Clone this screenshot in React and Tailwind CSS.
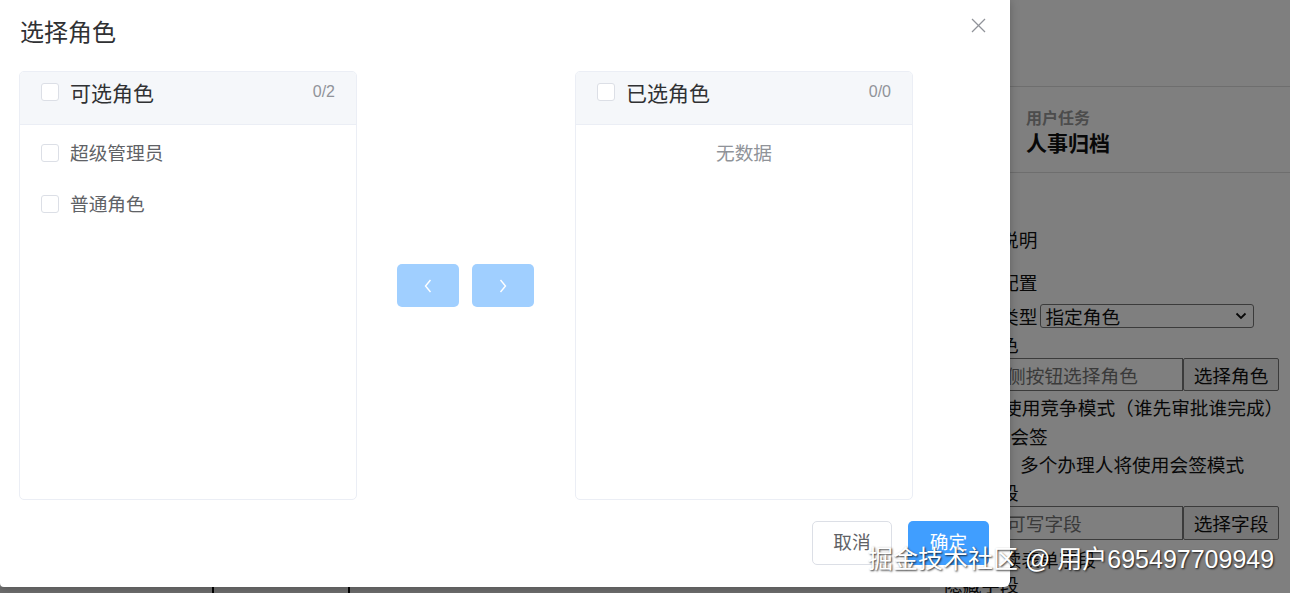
import React from "react";

const CJK = { fontFamily: '"Noto Sans CJK SC", "Noto Sans", sans-serif' };

function Checkbox() {
  return <span className="inline-block w-[18px] h-[18px] shrink-0 rounded-[3px] border border-[#dcdfe6] bg-white" />;
}

function Panel({ title, count, children }) {
  return (
    <div className="w-[338px] h-[429px] shrink-0 rounded-[5px] border border-[#ebeef5] bg-white overflow-hidden flex flex-col">
      <div className="h-[53px] shrink-0 bg-[#f5f7fa] border-b border-[#ebeef5] flex items-center pl-[21px] pr-[21px] pb-[12px]">
        <Checkbox />
        <span className="ml-[11px] text-[21px] text-[#303133] leading-none">{title}</span>
        <span className="ml-auto text-[16px] text-[#909399] leading-none" style={{ fontFamily: '"Liberation Sans", Arial, sans-serif' }}>{count}</span>
      </div>
      <div className="flex-1 pt-[2px]">{children}</div>
    </div>
  );
}

function Item({ label }) {
  return (
    <div className="h-[51px] flex items-center pl-[21px]">
      <Checkbox />
      <span className="ml-[11px] text-[18.7px] text-[#606266] leading-none">{label}</span>
    </div>
  );
}

function ArrowBtn({ dir }) {
  return (
    <div className="w-[62px] h-[43px] rounded-[5px] bg-[#a0cfff] flex items-center justify-center">
      <svg width="10" height="16" viewBox="0 0 10 16" fill="none" stroke="white" strokeWidth="1.4">
        {dir === "left" ? <polyline points="7.5,2 2.5,8 7.5,14" /> : <polyline points="2.5,2 7.5,8 2.5,14" />}
      </svg>
    </div>
  );
}

export default function App() {
  return (
    <div className="relative w-[1290px] h-[593px] overflow-hidden bg-white" style={CJK}>
      {/* underlying page */}
      <div className="flex h-full">
        <div className="w-[930px] flex flex-col">
          <div className="flex-1" />
          <div className="h-[6px] bg-[#dcdcdc] flex">
            <div className="w-[212px]" />
            <div className="w-[2px] bg-black" />
            <div className="w-[134px]" />
            <div className="w-[2px] bg-black" />
          </div>
        </div>
        <div className="w-[360px] flex flex-col text-[18.7px] leading-[28px] text-[#111]">
          <div className="h-[87px] shrink-0 border-b border-[#dcdcdc]" />
          <div className="h-[86px] shrink-0 border-b border-[#dcdcdc] pl-[96px] pt-[20px]">
            <div className="text-[16px] leading-[20px] text-[#999] font-bold">用户任务</div>
            <div className="text-[21px] leading-[30px] font-bold">人事归档</div>
          </div>
          <div className="pl-[14px] pr-[11px]">
            <div className="mt-[52px] h-[28px]">审批人说明</div>
            <div className="mt-[15px] h-[28px]">审批人配置</div>
            <div className="mt-[6px] h-[28px] flex items-center">
              <span>审批人类型</span>
              <div className="ml-[3px] w-[214px] h-[24px] border border-[#767676] rounded-[3px] flex items-center pl-[4px] pr-[6px]">
                <span className="leading-none">指定角色</span>
                <svg className="ml-auto" width="12" height="8" viewBox="0 0 12 8" fill="none" stroke="#111" strokeWidth="1.8">
                  <polyline points="1.5,1.5 6,6 10.5,1.5" />
                </svg>
              </div>
            </div>
            <div className="h-[28px]">审批角色</div>
            <div className="h-[33px] flex">
              <div className="w-[239px] h-full border border-[#767676] flex items-center pl-[6px] text-[#757575]">点击右侧按钮选择角色</div>
              <div className="w-[96px] h-full border border-[#767676] rounded-[2px] bg-[#efefef] flex items-center justify-center">选择角色</div>
            </div>
            <div className="mt-[2px] h-[28px] pl-[59px]">使用竞争模式（谁先审批谁完成）</div>
            <div className="mt-[1px] h-[28px] pl-[29px]">是否会签</div>
            <div className="h-[28px] flex items-center pl-[49px]">
              <span className="w-[13px] h-[13px] border border-[#767676] rounded-[2px] mr-[14px]" />
              <span>多个办理人将使用会签模式</span>
            </div>
            <div className="h-[28px]">可写字段</div>
            <div className="h-[34px] flex">
              <div className="w-[239px] h-full border border-[#767676] flex items-center pl-[6px] text-[#757575]">请选择可写字段</div>
              <div className="w-[96px] h-full border border-[#767676] rounded-[2px] bg-[#efefef] flex items-center justify-center">选择字段</div>
            </div>
            <div className="mt-[5px] h-[28px] pl-[40px]">只读表单字段</div>
            <div className="mt-[-3px] h-[28px]">隐藏字段</div>
          </div>
        </div>
      </div>

      {/* modal overlay */}
      <div className="absolute inset-0 bg-black/50" />

      {/* dialog */}
      <div className="absolute left-0 top-0 w-[1010px] h-[587px] bg-white rounded-br-[6px] rounded-bl-[4px] shadow-[0_1px_10px_rgba(0,0,0,0.25)] flex flex-col">
        <div className="relative h-[71px] shrink-0 pl-[20px] pt-[15px]">
          <div className="text-[24px] leading-[32px] text-[#303133]">选择角色</div>
          <svg className="absolute right-[24px] top-[18px]" width="15" height="15" viewBox="0 0 15 15" fill="none" stroke="#909399" strokeWidth="1.3">
            <line x1="1" y1="1" x2="14" y2="14" />
            <line x1="14" y1="1" x2="1" y2="14" />
          </svg>
        </div>
        <div className="flex items-center pl-[19px]">
          <Panel title="可选角色" count="0/2">
            <Item label="超级管理员" />
            <Item label="普通角色" />
          </Panel>
          <div className="ml-[40px] mr-[41px] flex gap-[13px]">
            <ArrowBtn dir="left" />
            <ArrowBtn dir="right" />
          </div>
          <Panel title="已选角色" count="0/0">
            <div className="h-[51px] flex items-center justify-center text-[18.7px] text-[#909399] leading-none">无数据</div>
          </Panel>
        </div>
        <div className="mt-[21px] flex justify-end pr-[21px] gap-[16px]">
          <div className="w-[80px] h-[44px] rounded-[5px] border border-[#dcdfe6] bg-white flex items-center justify-center pb-[4px] text-[18.7px] text-[#606266]">取消</div>
          <div className="w-[81px] h-[44px] rounded-[5px] bg-[#409eff] flex items-center justify-center pb-[4px] text-[18.7px] text-white">确定</div>
        </div>
      </div>

      {/* watermark */}
      <div
        className="absolute left-[868px] top-[543px] text-[25px] leading-[32px] text-white whitespace-nowrap [text-shadow:1px_1px_2px_rgba(0,0,0,0.8)]"
        style={{ fontFamily: '"Liberation Sans", "Noto Sans CJK SC", sans-serif' }}
      >
        掘金技术社区 @ 用户695497709949
      </div>
    </div>
  );
}
